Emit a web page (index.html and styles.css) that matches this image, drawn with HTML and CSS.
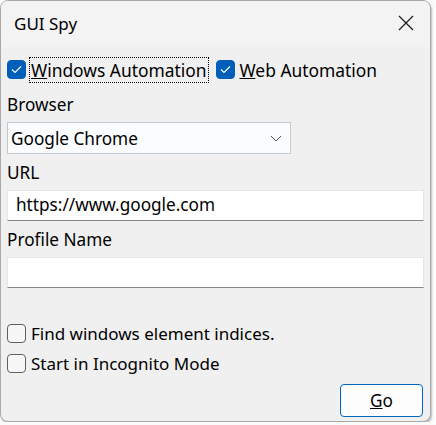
FILE: index.html
```html
<!DOCTYPE html>
<html lang="en">
<head>
    <meta charset="UTF-8">
    <title>GUI Spy</title>
    <link rel="stylesheet" href="styles.css">
</head>
<body>
    <div class="window">
        <div class="titlebar">
            <span class="title">GUI Spy</span>
            <span class="close">
                <svg width="16" height="16" viewBox="0 0 16 16">
                    <path d="M1 1 L15 15 M15 1 L1 15" stroke="#1a1a1a" stroke-width="1.2" fill="none"/>
                </svg>
            </span>
        </div>

        <div class="content">
            <div class="mode-row">
                <label class="check">
                    <span class="box checked">
                        <svg width="11" height="9" viewBox="0 0 11 9"><path d="M1 4.5 L4 7.5 L10 1.5" stroke="#fff" stroke-width="1.1" fill="none"/></svg>
                    </span>
                    <span class="focused"><u>W</u>indows Automation</span>
                </label>
                <label class="check">
                    <span class="box checked">
                        <svg width="11" height="9" viewBox="0 0 11 9"><path d="M1 4.5 L4 7.5 L10 1.5" stroke="#fff" stroke-width="1.1" fill="none"/></svg>
                    </span>
                    <span><u>W</u>eb Automation</span>
                </label>
            </div>

            <div class="field-label first">Browser</div>
            <div class="combo">
                <span>Google Chrome</span>
                <svg width="12" height="7" viewBox="0 0 12 7"><path d="M1 1 L6 6 L11 1" stroke="#5a5a5a" stroke-width="1" fill="none"/></svg>
            </div>

            <div class="field-label">URL</div>
            <div class="textbox">https://www.google.com</div>

            <div class="field-label">Profile Name</div>
            <div class="textbox"></div>

            <div class="options">
                <label class="check">
                    <span class="box"></span>
                    <span>Find windows element indices.</span>
                </label>
                <label class="check">
                    <span class="box"></span>
                    <span>Start in Incognito Mode</span>
                </label>
            </div>

            <div class="footer">
                <button class="go-button"><u>G</u>o</button>
            </div>
        </div>
    </div>
</body>
</html>
```

FILE: styles.css
```css
body {
    margin: 0;
    background: #fbfbfb;
    font-family: "Noto Sans", "Open Sans", sans-serif;
    color: #000;
}

.window {
    width: 429px;
    height: 420px;
    border: 1px solid #a9a9a9;
    border-radius: 8px;
    background: #f0f0f0;
    overflow: hidden;
    box-shadow: 1px 2px 2px rgba(0, 0, 0, 0.25);
    display: flex;
    flex-direction: column;
}

.titlebar {
    height: 46px;
    background: #f3f3f3;
    display: flex;
    align-items: center;
    justify-content: space-between;
    padding: 0 16px 0 13px;
    flex-shrink: 0;
}

.title {
    font-size: 17px;
    margin-top: -1px;
}

.close {
    display: flex;
    margin-top: -2px;
}

.content {
    padding: 0 6px;
    display: flex;
    flex-direction: column;
    flex: 1;
    font-size: 17.2px;
}

.check {
    display: flex;
    align-items: center;
    gap: 5px;
    height: 23px;
}

.box {
    width: 17px;
    height: 17px;
    border: 1px solid #5f5f5f;
    border-radius: 4px;
    background: #f7f7f7;
    display: flex;
    align-items: center;
    justify-content: center;
}

.box.checked {
    background: #005fb8;
    border-color: #005fb8;
}

.mode-row {
    display: flex;
    gap: 8px;
    margin-top: 11px;
    font-size: 17.4px;
}

.focused {
    outline: 1px dotted #000;
    padding: 0 1px;
    margin-left: -1px;
}

.field-label {
    height: 28px;
    line-height: 28px;
    margin-top: 5px;
}

.field-label.first {
    margin-top: 10px;
}

.combo {
    box-sizing: border-box;
    width: 284px;
    height: 32px;
    margin-top: 3px;
    border: 1px solid #c3cad3;
    background: #fbfcfe;
    display: flex;
    align-items: center;
    justify-content: space-between;
    padding: 0 8px 0 3px;
}

.textbox {
    box-sizing: border-box;
    height: 31px;
    margin-top: 3px;
    background: #fff;
    border: 1px solid #e6e6e6;
    border-bottom-color: #858585;
    padding: 0 8px;
    line-height: 28px;
}

.options {
    margin-top: 34px;
    display: flex;
    flex-direction: column;
    gap: 7px;
    font-size: 17px;
}

.footer {
    display: flex;
    justify-content: flex-end;
    margin-top: 9px;
    padding-right: 1px;
}

.go-button {
    width: 83px;
    height: 33px;
    background: #fdfdfd;
    border: 1px solid #0067c0;
    border-radius: 4px;
    font-family: inherit;
    font-size: 17.2px;
    color: #000;
    padding: 0;
}
```
